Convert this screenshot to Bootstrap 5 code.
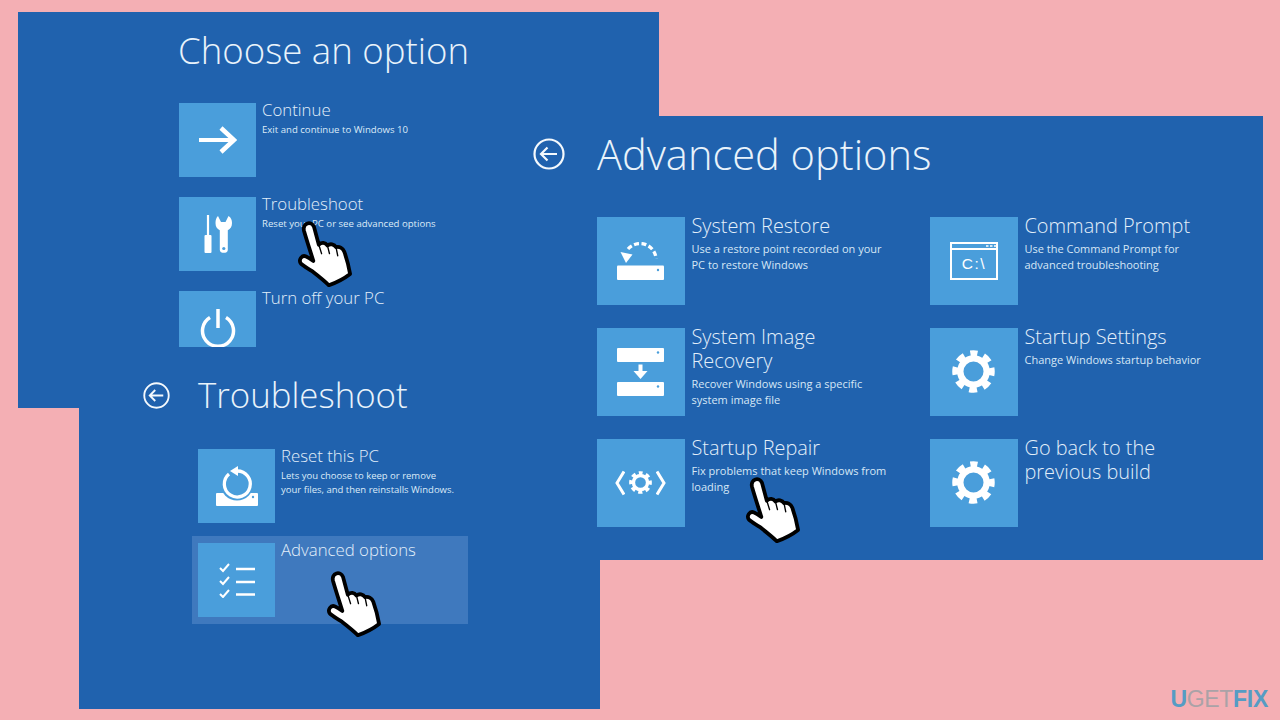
<!DOCTYPE html>
<html lang="en">
<head>
<meta charset="utf-8">
<title>Advanced options</title>
<link href="https://cdn.jsdelivr.net/npm/bootstrap@5.3.0/dist/css/bootstrap.min.css" rel="stylesheet">
<style>
html,body{height:100%;}
body{background:#f4afb4;font-family:"Open Sans","Liberation Sans",sans-serif;overflow:hidden;}
.stage{width:1280px;height:720px;}
.win{background:#2062ae;color:#e6f1fa;font-weight:300;}
.win1{left:18px;top:12px;width:641px;height:396px;padding:13px 0 0 160px;}
.win2{left:79px;top:347px;width:521px;height:362px;padding:23px 0 0 64px;}
.win3{left:515px;top:116px;width:748px;height:444px;padding:8px 0 0 18px;}
.hd{font-weight:300;margin:0;color:#e9f3fb;white-space:nowrap;}
.win1 .hd{font-size:36.6px;line-height:50px;}
.win2 .hd{font-size:34.8px;line-height:50px;}
.win3 .hd{font-size:41.6px;line-height:60px;}
.back{fill:none;stroke:#f4f9fd;}
.win2 .back{width:27px;height:27px;stroke-width:2.2;}
.win3 .back{width:32px;height:32px;stroke-width:2.2;}
.win2 .headrow{gap:28px;margin-bottom:22px;}
.win3 .headrow{gap:32px;margin-bottom:33px;}
.list1{padding-left:1px;margin-top:28px;gap:20px;}
.list2{margin-left:49px;width:276px;gap:6px;}
.entry2{padding:7px 6px;}
.entry2.picked{background:#3f79be;}
.tile{background:#4a9edb;flex:none;}
.tile-sm{width:77px;height:74px;}
.tile-lg{width:87.5px;height:87.5px;}
.copy-sm{margin:-3px 0 0 6px;}
.copy-lg{margin:-3px 0 0 7px;}
.ttl-sm{font-size:16.8px;line-height:20px;font-weight:300;color:#e3effa;}
.sub1{font-size:9.6px;line-height:14px;font-weight:400;margin-top:3px;color:#dcebf8;}
.sub2{font-size:9.5px;line-height:14px;font-weight:400;margin-top:3px;color:#dcebf8;}
.ttl-lg{font-size:19.9px;line-height:24px;font-weight:300;color:#e3effa;}
.sub3{font-size:11px;line-height:16px;font-weight:400;margin-top:3px;color:#d6e7f6;}
.grid3{display:grid;grid-template-columns:333px 300px;row-gap:23.5px;margin-left:64px;}
.ic{display:block;}
.hand{position:absolute;width:56px;height:67px;}
.win1 .hand{left:279px;top:208px;}
.win2 .hand{left:247px;top:223px;}
.win3 .hand{left:230px;top:360px;}
.logo{right:12px;bottom:9px;font-family:"Liberation Sans",sans-serif;font-size:23px;line-height:24px;letter-spacing:-.3px;}
.lg-a{color:#559cc4;font-weight:700;}
.lg-b{color:#aaa2a7;font-weight:400;}
</style>
</head>
<body>
<svg width="0" height="0" class="position-absolute">
<defs>
<symbol id="hand" viewBox="0 0 162 195">
<path d="M20 32C14 8 42 2 49 20L63 72C71 64 82 65 88 74C96 68 108 70 113 79C122 76 133 81 137 92C145 114 150 134 154 157C135 172 114 182 92 190C78 176 60 162 42 148C30 140 18 134 11 127C3 116 13 101 26 106C33 109 40 114 47 119C38 90 28 60 20 32Z" fill="#fff" stroke="#000" stroke-width="11" stroke-linejoin="round"/>
<path d="M88 74L94 98M113 79L118 104M63 72L71 98" fill="none" stroke="#000" stroke-width="4" stroke-linecap="round"/>
</symbol>
<symbol id="gear" viewBox="0 0 44 44">
<circle cx="22" cy="22" r="13.5" fill="none" stroke="#fff" stroke-width="6.5"/>
<circle cx="22" cy="22" r="18" fill="none" stroke="#fff" stroke-width="7.5" stroke-dasharray="7.8 6.34" stroke-dashoffset="3.9" transform="rotate(-90 22 22)"/>
</symbol>
<symbol id="backarrow" viewBox="0 0 32 32">
<circle cx="16" cy="16" r="14.5"/>
<path d="M24 16H8M14.5 9.5L8 16l6.5 6.5"/>
</symbol>
</defs>
</svg>

<main class="stage position-relative">

<section class="win win1 position-absolute">
  <h1 class="hd">Choose an option</h1>
  <div class="list1 d-flex flex-column">
    <div class="d-flex">
      <div class="tile tile-sm d-flex align-items-center justify-content-center">
        <svg class="ic" width="38" height="28" viewBox="0 0 38 28" fill="none" stroke="#fff"><path d="M0 14H34" stroke-width="4"/><path d="M22 2L35 14 22 26" stroke-width="4.5"/></svg>
      </div>
      <div class="copy-sm"><div class="ttl-sm">Continue</div><div class="sub1">Exit and continue to Windows 10</div></div>
    </div>
    <div class="d-flex">
      <div class="tile tile-sm d-flex align-items-center justify-content-center">
        <svg class="ic" width="28" height="38" viewBox="0 0 28 38"><path d="M2.900 0H5.100V20H2.900Z" fill="#fff"/><rect x=".5" y="20" width="7" height="18" rx="1" fill="#fff"/><path d="M14 1L17 7 21.500 7 24.500 1C27 2.500 28 5 28 8C28 11.500 26.500 14 23.800 15.200V35C23.800 38.800 15.800 38.800 15.800 35V15.200C13 14 11.500 11.500 11.500 8C11.500 5 12.300 2.500 14 1Z" fill="#fff"/><circle cx="19.800" cy="33.500" r="1.600" fill="#4a9edb"/></svg>
      </div>
      <div class="copy-sm"><div class="ttl-sm">Troubleshoot</div><div class="sub1">Reset your PC or see advanced options</div></div>
    </div>
    <div class="d-flex">
      <div class="tile tile-sm d-flex align-items-center justify-content-center">
        <svg class="ic" width="36" height="40" viewBox="0 0 36 40" fill="none" stroke="#fff" stroke-width="3.5"><path d="M10 9.500A15.500 15.500 0 1 0 26 9.500"/><path d="M18 1V20"/></svg>
      </div>
      <div class="copy-sm"><div class="ttl-sm">Turn off your PC</div></div>
    </div>
  </div>
  <svg class="hand"><use href="#hand"/></svg>
</section>

<section class="win win2 position-absolute">
  <div class="headrow d-flex align-items-center">
    <svg class="back ic"><use href="#backarrow"/></svg>
    <h1 class="hd">Troubleshoot</h1>
  </div>
  <div class="list2 d-flex flex-column">
    <div class="entry2 d-flex">
      <div class="tile tile-sm d-flex align-items-center justify-content-center">
        <svg class="ic" width="42" height="40" viewBox="0 0 42 40"><rect x="0" y="27" width="42" height="13" rx="1" fill="#fff"/><circle cx="21" cy="18" r="16.500" fill="#4a9edb"/><path d="M13 8A13 13 0 1 0 21 5" fill="none" stroke="#fff" stroke-width="3.300"/><path d="M22 0L14 5 22 10Z" fill="#fff"/><circle cx="37" cy="31" r="1.200" fill="#4a9edb"/></svg>
      </div>
      <div class="copy-sm"><div class="ttl-sm">Reset this PC</div><div class="sub2">Lets you choose to keep or remove<br>your files, and then reinstalls Windows.</div></div>
    </div>
    <div class="entry2 picked d-flex">
      <div class="tile tile-sm d-flex align-items-center justify-content-center">
        <svg class="ic" width="36" height="35" viewBox="0 0 36 35" fill="none" stroke="#fff"><path d="M1 5L4 8 10 1M1 18L4 21 10 14M1 31L4 34 10 27" stroke-width="2"/><path d="M17 6H36M17 19H36M17 31.500H36" stroke-width="2.500"/></svg>
      </div>
      <div class="copy-sm"><div class="ttl-sm">Advanced options</div></div>
    </div>
  </div>
  <svg class="hand"><use href="#hand"/></svg>
</section>

<section class="win win3 position-absolute">
  <div class="headrow d-flex align-items-center">
    <svg class="back ic"><use href="#backarrow"/></svg>
    <h1 class="hd">Advanced options</h1>
  </div>
  <div class="grid3">
    <div class="d-flex">
      <div class="tile tile-lg d-flex align-items-center justify-content-center">
        <svg class="ic" width="47" height="38" viewBox="0 0 47 38"><rect y="23.500" width="47" height="14.500" rx="1" fill="#fff"/><circle cx="41" cy="28" r="1.200" fill="#4a9edb"/><path d="M11 7A16 16 0 0 1 39 16.500" fill="none" stroke="#fff" stroke-width="3.300" stroke-dasharray="5 2.500"/><path d="M9 21L3.500 10 15.500 12.500Z" fill="#fff"/></svg>
      </div>
      <div class="copy-lg"><div class="ttl-lg">System Restore</div><div class="sub3">Use a restore point recorded on your<br>PC to restore Windows</div></div>
    </div>
    <div class="d-flex">
      <div class="tile tile-lg d-flex align-items-center justify-content-center">
        <svg class="ic" width="48" height="38" viewBox="0 0 48 38"><rect x="1" y="1" width="46" height="36" fill="none" stroke="#fff" stroke-width="2"/><path d="M0 7H48" stroke="#fff" stroke-width="1.800"/><path d="M36 4h2.500M40 4h2.500M44 4h2" stroke="#fff" stroke-width="1.500"/><text x="24" y="27" text-anchor="middle" font-family="Liberation Sans,sans-serif" font-size="15.500" letter-spacing="1.500" fill="#fff">C:\</text></svg>
      </div>
      <div class="copy-lg"><div class="ttl-lg">Command Prompt</div><div class="sub3">Use the Command Prompt for<br>advanced troubleshooting</div></div>
    </div>
    <div class="d-flex">
      <div class="tile tile-lg d-flex align-items-center justify-content-center">
        <svg class="ic" width="47" height="48" viewBox="0 0 47 48"><rect width="47" height="14" rx="1" fill="#fff"/><circle cx="41" cy="4.500" r="1.200" fill="#4a9edb"/><rect y="34" width="47" height="14" rx="1" fill="#fff"/><circle cx="41" cy="38.500" r="1.200" fill="#4a9edb"/><path d="M21.500 16.500H25.500V23H30.500L23.500 31 16.500 23H21.500Z" fill="#fff"/></svg>
      </div>
      <div class="copy-lg"><div class="ttl-lg">System Image<br>Recovery</div><div class="sub3">Recover Windows using a specific<br>system image file</div></div>
    </div>
    <div class="d-flex">
      <div class="tile tile-lg d-flex align-items-center justify-content-center">
        <svg class="ic" width="43" height="43"><use href="#gear"/></svg>
      </div>
      <div class="copy-lg"><div class="ttl-lg">Startup Settings</div><div class="sub3">Change Windows startup behavior</div></div>
    </div>
    <div class="d-flex">
      <div class="tile tile-lg d-flex align-items-center justify-content-center gap-1">
        <svg class="ic" width="10" height="26" viewBox="0 0 10 26" fill="none" stroke="#fff" stroke-width="3"><path d="M9 1.500L2 13 9 24.500"/></svg>
        <svg class="ic" width="23" height="23"><use href="#gear"/></svg>
        <svg class="ic" width="10" height="26" viewBox="0 0 10 26" fill="none" stroke="#fff" stroke-width="3"><path d="M1 1.500L8 13 1 24.500"/></svg>
      </div>
      <div class="copy-lg"><div class="ttl-lg">Startup Repair</div><div class="sub3">Fix problems that keep Windows from<br>loading</div></div>
    </div>
    <div class="d-flex">
      <div class="tile tile-lg d-flex align-items-center justify-content-center">
        <svg class="ic" width="43" height="43"><use href="#gear"/></svg>
      </div>
      <div class="copy-lg"><div class="ttl-lg">Go back to the<br>previous build</div></div>
    </div>
  </div>
  <svg class="hand"><use href="#hand"/></svg>
</section>

<div class="logo position-absolute"><span class="lg-a">U</span><span class="lg-b">GET</span><span class="lg-a">FIX</span></div>
</main>
<script src="https://cdn.jsdelivr.net/npm/bootstrap@5.3.0/dist/js/bootstrap.bundle.min.js"></script>
</body>
</html>
